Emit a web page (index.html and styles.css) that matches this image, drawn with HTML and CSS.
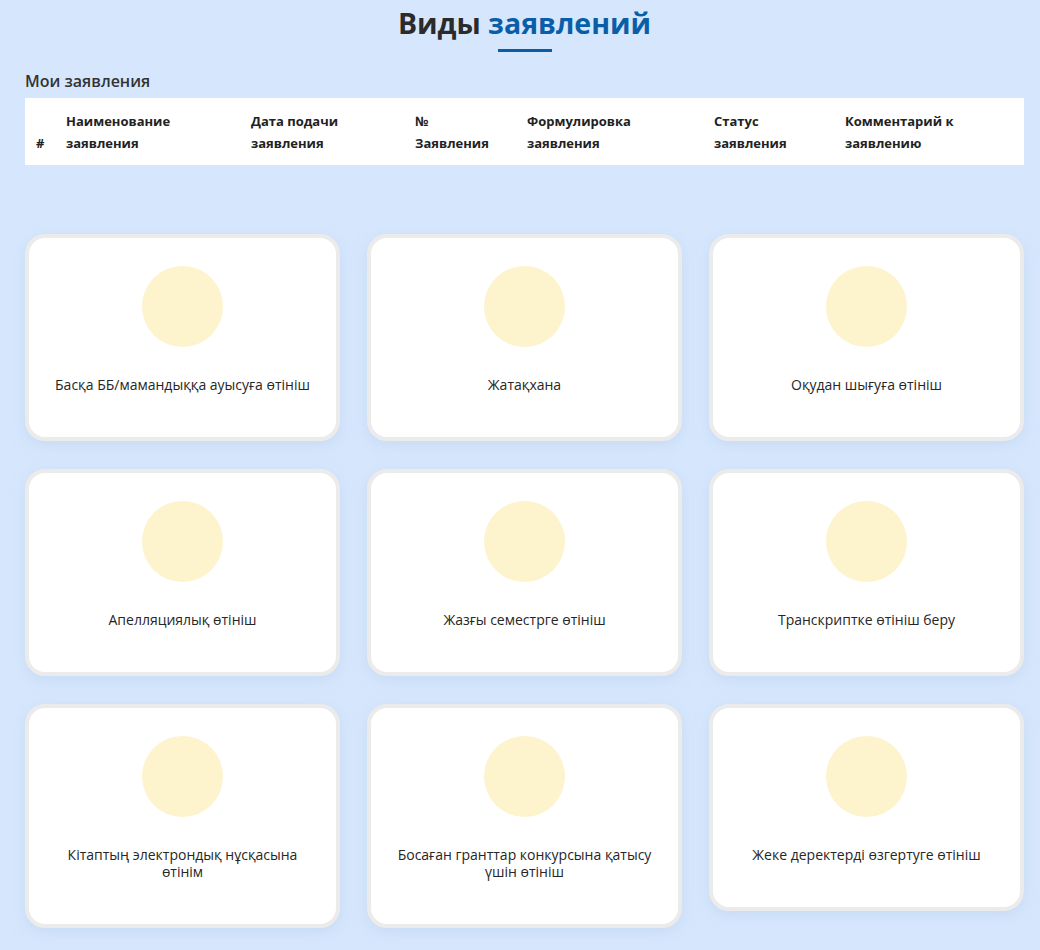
FILE: index.html
```html
<!DOCTYPE html>
<html lang="ru">
  <head>
    <meta charset="UTF-8" />
    <meta name="viewport" content="width=device-width, initial-scale=1.0" />
    <title>Виды заявлений</title>
    <link rel="stylesheet" href="styles.css">
  </head>
  <body>
    <div class="main">
      <h1 class="title">Виды <span>заявлений</span></h1>
      <div class="title-line"></div>

      <div class="my">
        <div class="my-title">Мои заявления</div>
        <table class="list">
          <thead>
            <tr>
              <th class="num">#</th>
              <th class="c1">Наименование<br>заявления</th>
              <th class="c2">Дата подачи<br>заявления</th>
              <th class="c3">№<br>Заявления</th>
              <th class="c4">Формулировка<br>заявления</th>
              <th class="c5">Статус<br>заявления</th>
              <th class="c6">Комментарий к<br>заявлению</th>
            </tr>
          </thead>
          <tbody></tbody>
        </table>
      </div>

      <div class="cards">
        <div class="card"><div class="icon"></div><div class="name">Басқа ББ/мамандыққа ауысуға өтініш</div></div>
        <div class="card"><div class="icon"></div><div class="name">Жатақхана</div></div>
        <div class="card"><div class="icon"></div><div class="name">Оқудан шығуға өтініш</div></div>
        <div class="card"><div class="icon"></div><div class="name">Апелляциялық өтініш</div></div>
        <div class="card"><div class="icon"></div><div class="name">Жазғы семестрге өтініш</div></div>
        <div class="card"><div class="icon"></div><div class="name">Транскриптке өтініш беру</div></div>
        <div class="card"><div class="icon"></div><div class="name">Кітаптың электрондық нұсқасына өтінім</div></div>
        <div class="card"><div class="icon"></div><div class="name">Босаған гранттар конкурсына қатысу үшін өтініш</div></div>
        <div class="card"><div class="icon"></div><div class="name">Жеке деректерді өзгертуге өтініш</div></div>
      </div>
    </div>
  </body>
</html>
```

FILE: styles.css
```css
* {
  padding: 0;
  margin: 0;
  box-sizing: border-box;
}
body {
  background: #d6e7fd;
  font-family: "Open Sans", "Noto Sans", sans-serif;
  color: #2b2b2b;
}
.main {
  padding: 0 16px 40px 25px;
}
.title {
  text-align: center;
  font-size: 28.5px;
  line-height: 40px;
  font-weight: 700;
  padding-top: 3px;
  color: #2b2b2b;
}
.title span {
  color: #0a5ea8;
}
.title-line {
  width: 54px;
  height: 3px;
  background: #0a5ea8;
  margin: 6px auto 0;
}
.my-title {
  font-size: 16px;
  line-height: 22px;
  font-weight: 600;
  margin-top: 18px;
  margin-bottom: 6px;
  color: #333;
}
.list {
  width: 100%;
  background: #fff;
  border-collapse: collapse;
}
.list th {
  text-align: left;
  vertical-align: bottom;
  font-size: 13px;
  line-height: 22px;
  font-weight: 700;
  padding: 12px 8px 11px 0;
  color: #222;
}
.list th.num { width: 41px; padding-left: 11px; }
.list th.c1 { width: 185px; }
.list th.c2 { width: 164px; }
.list th.c3 { width: 112px; }
.list th.c4 { width: 187px; }
.list th.c5 { width: 131px; }
.cards {
  margin-top: 69px;
  display: grid;
  grid-template-columns: repeat(3, 1fr);
  column-gap: 27px;
  row-gap: 28px;
  align-items: start;
}
.card {
  background: #fff;
  border: 4px solid #ebebeb;
  border-radius: 20px;
  padding: 28px 24px 44px;
  text-align: center;
  box-shadow: 0 4px 14px #b9d0ee80;
}
.icon {
  width: 81px;
  height: 81px;
  border-radius: 50%;
  background: #fdf3cd;
  margin: 0 auto 29px;
}
.name {
  font-size: 14px;
  line-height: 17px;
  font-weight: 500;
  color: #262626;
}
```
